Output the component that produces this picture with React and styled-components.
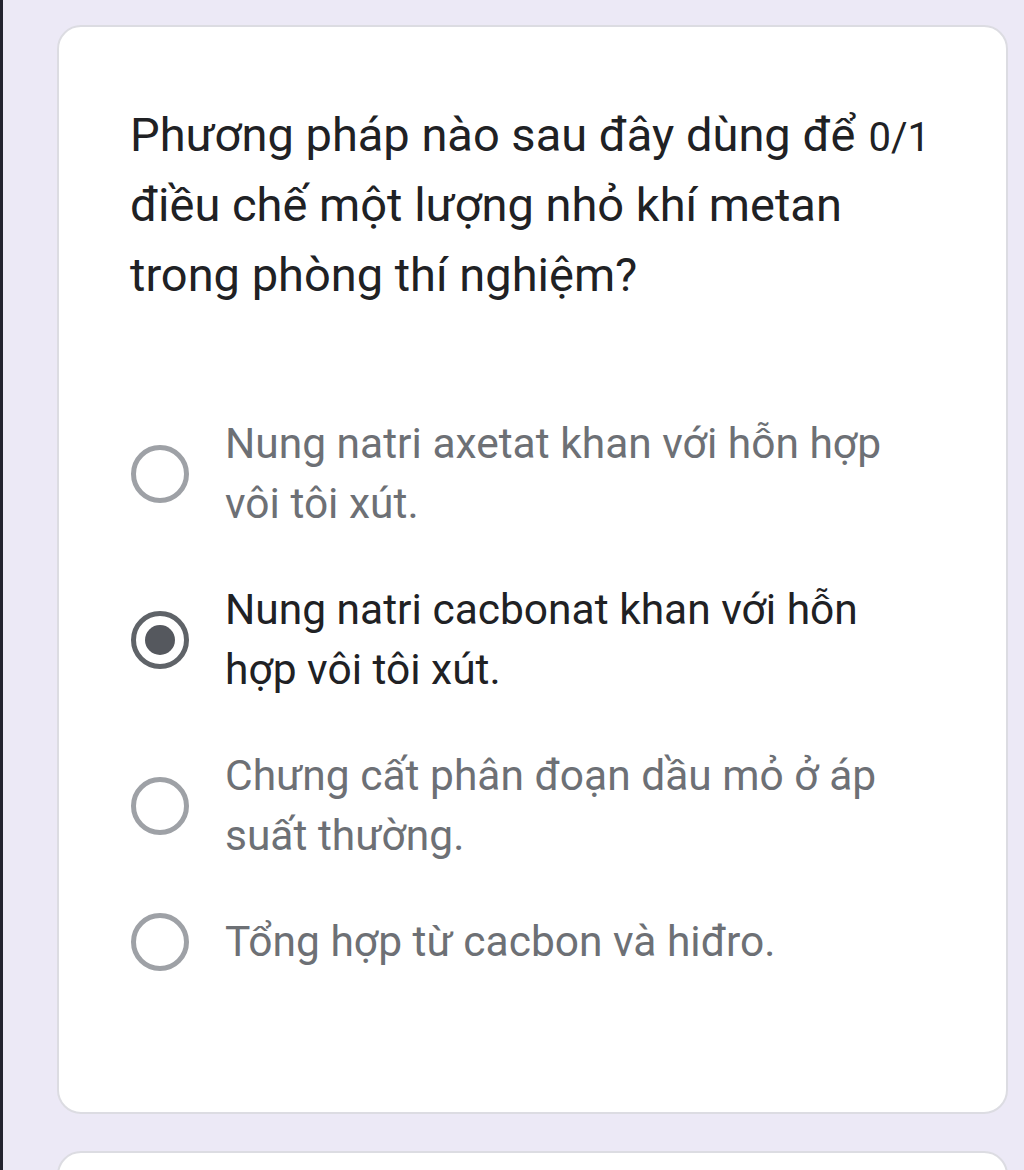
import React from "react";
import styled, { createGlobalStyle } from "styled-components";

const Global = createGlobalStyle`
  html, body { margin: 0; padding: 0; }
  body {
    background: #ece9f6;
    font-family: Roboto, "Noto Sans", Arial, sans-serif;
    -webkit-font-smoothing: antialiased;
  }
`;

const Page = styled.div`
  display: flex;
  height: 1170px;
  overflow: hidden;
`;

const EdgeBar = styled.div`
  width: 3px;
  flex: none;
  background: #23232f;
`;

const Column = styled.div`
  display: flex;
  flex-direction: column;
  gap: 37px;
  padding: 25px 0 0 54px;
`;

const Card = styled.div`
  box-sizing: border-box;
  width: 951px;
  background: #ffffff;
  border: 2px solid #dcdce2;
  border-radius: 24px;
  padding: ${(p) => (p.$empty ? "0" : "73px 76px 140px 71px")};
  min-height: ${(p) => (p.$empty ? "80px" : "auto")};
`;

const Header = styled.div`
  display: flex;
  align-items: baseline;
  gap: 6px;
`;

const Question = styled.div`
  flex: 1;
  font-size: 47px;
  line-height: 70px;
  color: #202124;
`;

const Points = styled.div`
  flex: none;
  font-size: 40px;
  color: #202124;
`;

const Options = styled.div`
  display: flex;
  flex-direction: column;
  gap: 46px;
  margin-top: 104px;
`;

const Option = styled.label`
  display: flex;
  align-items: center;
  gap: 36px;
`;

const Radio = styled.span`
  box-sizing: border-box;
  flex: none;
  width: 58px;
  height: 58px;
  border-radius: 50%;
  border: 5px solid ${(p) => (p.$checked ? "#5f6368" : "#9ea1a6")};
  display: flex;
  align-items: center;
  justify-content: center;
  margin-left: 1px;
`;

const Dot = styled.span`
  width: 30px;
  height: 30px;
  border-radius: 50%;
  background: #55585e;
`;

const OptionText = styled.span`
  font-size: 42.5px;
  line-height: 60px;
  color: ${(p) => (p.$checked ? "#202124" : "#6d7075")};
  max-width: 690px;
`;

const options = [
  "Nung natri axetat khan với hỗn hợp vôi tôi xút.",
  "Nung natri cacbonat khan với hỗn hợp vôi tôi xút.",
  "Chưng cất phân đoạn dầu mỏ ở áp suất thường.",
  "Tổng hợp từ cacbon và hiđro.",
];

export default function App() {
  const selected = 1;
  return (
    <>
      <Global />
      <Page>
        <EdgeBar />
        <Column>
          <Card>
            <Header>
              <Question>
                Phương pháp nào sau đây dùng để điều chế một lượng nhỏ khí metan
                trong phòng thí nghiệm?
              </Question>
              <Points>0/1</Points>
            </Header>
            <Options>
              {options.map((o, i) => (
                <Option key={i}>
                  <Radio $checked={i === selected}>{i === selected && <Dot />}</Radio>
                  <OptionText $checked={i === selected}>{o}</OptionText>
                </Option>
              ))}
            </Options>
          </Card>
          <Card $empty />
        </Column>
      </Page>
    </>
  );
}
